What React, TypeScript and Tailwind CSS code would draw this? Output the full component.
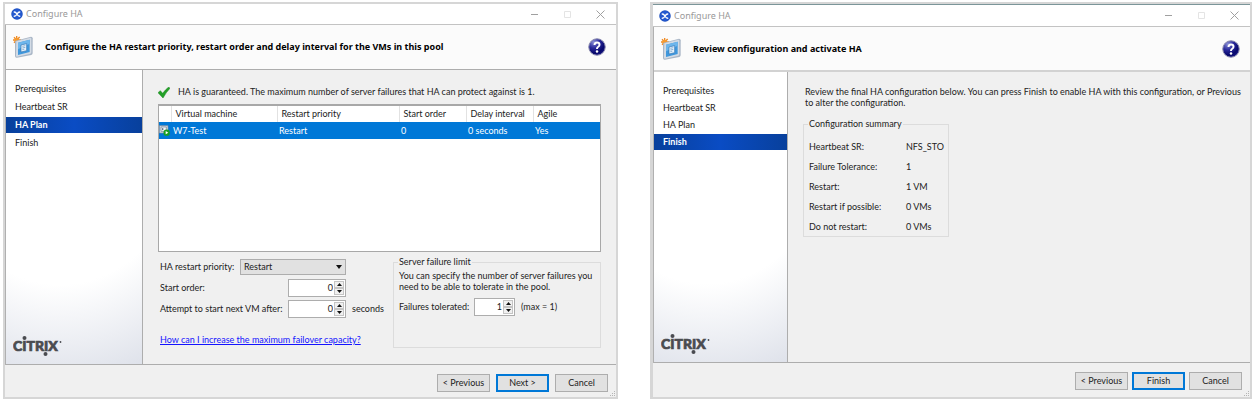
import { useState } from "react";
import type { ReactNode } from "react";
import clsx from "clsx";

const steps = ["Prerequisites", "Heartbeat SR", "HA Plan", "Finish"];

const summary = [
  { label: "Heartbeat SR:", value: "NFS_STO" },
  { label: "Failure Tolerance:", value: "1" },
  { label: "Restart:", value: "1 VM" },
  { label: "Restart if possible:", value: "0 VMs" },
  { label: "Do not restart:", value: "0 VMs" },
];

const columns = ["Virtual machine", "Restart priority", "Start order", "Delay interval", "Agile"];

const XenIcon = () => (
  <svg viewBox="0 0 24 24" className="size-3 shrink-0" aria-hidden="true">
    <circle cx="12" cy="12" r="11.5" fill="#1d4fc0" />
    <circle cx="12" cy="12" r="10" fill="#2459cf" />
    <path d="M6.500 8c2.500 0 4 1.500 5.500 4 1.500-2.500 3-4 5.500-4M6.500 16.500c2.500 0 4-1.500 5.500-4 1.500 2.500 3 4 5.500 4" stroke="#fff" strokeWidth="2.600" fill="none" strokeLinecap="round" />
  </svg>
);

const WizardIcon = () => (
  <svg viewBox="0 0 60 66" className="h-[22px] w-5 shrink-0" aria-hidden="true">
    <g stroke="#f08a24" strokeWidth="4">
      <path d="M11 0v24M0 12h24M3 4l17 17M20 3 3 20" />
    </g>
    <circle cx="11" cy="12" r="7" fill="#f59a2f" />
    <path d="M8 14 54 2q5 0 5 5v44q0 5-4 6L12 65q-6 1-6-5V18q0-3 2-4z" fill="#a9b6c6" />
    <path d="M10 16 52 5q3 0 3 3v41q0 3-3 4L12 62q-3 0-3-3z" fill="#d3dbe5" />
    <path d="M15 20 50 11v37l-35 9z" fill="#3f97dc" />
    <path d="M15 20 50 11v12L15 40z" fill="#6db6ec" />
    <path d="m24 27 17-4v21l-17 4z" fill="#e8f3fb" stroke="#3576b4" strokeWidth="2" />
    <path d="m28 31 9-2M28 36l9-2M28 41l6-1.500" stroke="#5f93c4" strokeWidth="2" />
  </svg>
);

const HelpIcon = () => (
  <svg viewBox="0 0 36 36" className="size-[18px]" aria-hidden="true">
    <defs>
      <radialGradient id="help" cx="0.3" cy="0.2" r="0.9">
        <stop offset="0" stopColor="#8a8fd6" />
        <stop offset="0.4" stopColor="#2a2a9c" />
        <stop offset="0.75" stopColor="#06066a" />
        <stop offset="1" stopColor="#1c1c8c" />
      </radialGradient>
    </defs>
    <circle cx="18" cy="18" r="16.500" fill="url(#help)" stroke="#8c8cae" strokeWidth="2" />
    <path d="M13 14q0-5 5-5t5 4.500q0 2.500-2.500 4T18 22" stroke="#fff" strokeWidth="4" fill="none" />
    <circle cx="18" cy="27" r="2.500" fill="#fff" />
  </svg>
);

const CheckIcon = () => (
  <svg viewBox="0 0 36 33" className="h-[11px] w-3 shrink-0" aria-hidden="true">
    <path d="M0 17 7 11l7 8Q22 8 32 0l4 4Q25 15 15 33z" fill="#23a127" stroke="#16801b" strokeWidth="1.500" />
  </svg>
);

const VmIcon = () => (
  <svg viewBox="0 0 33 33" className="size-[11px]" aria-hidden="true">
    <path d="M1 2h26v22H1z" fill="#d5dde6" stroke="#7d8b99" strokeWidth="2" />
    <path d="M6 6h16v13H6z" fill="#f4f7fa" stroke="#6b7c8e" strokeWidth="2" />
    <path d="M9 9v7l6-4z" fill="#4a6076" />
    <circle cx="23" cy="23" r="9.500" fill="#18a022" />
    <path d="M20 18v10l8-5z" fill="#fff" />
  </svg>
);

const CitrixLogo = () => (
  <svg viewBox="0 0 50 20" className="h-5 w-[50px]" role="img" aria-label="Citrix">
    <g fill="#4a4b50">
      <text x="0" y="15" fontFamily="Lato, sans-serif" fontWeight="900" fontSize="14" stroke="#4a4b50" strokeWidth="0.700">CITRIX</text>
      <circle cx="11.500" cy="2" r="2" />
      <circle cx="32.500" cy="18" r="2" />
      <circle cx="47.500" cy="6" r="0.900" />
    </g>
  </svg>
);

const CaptionButtons = () => (
  <div className="ml-auto flex h-full gap-[3px] pr-px text-[#a0a0a0]">
    <button aria-label="Minimize" className="grid w-[30px] place-items-center">
      <svg viewBox="0 0 9 9" className="size-[9px]"><path d="M1 4.500h7" stroke="currentColor" /></svg>
    </button>
    <button aria-label="Maximize" disabled className="grid w-[30px] place-items-center text-[#e4e4e4]">
      <svg viewBox="0 0 9 9" className="size-[9px]"><path d="M1.500 1.500h6v6h-6z" fill="none" stroke="currentColor" /></svg>
    </button>
    <button aria-label="Close" className="grid w-[30px] place-items-center">
      <svg viewBox="0 0 9 9" className="size-[9px]"><path d="m.5.5 8 8M8.500.5l-8 8" stroke="currentColor" /></svg>
    </button>
  </div>
);

const DialogButton = ({ children, primary }: { children: ReactNode; primary?: boolean }) => (
  <button
    className={clsx(
      "h-[18px] w-[53px] bg-[#e1e1e1] text-center leading-[14px]",
      primary ? "border-2 border-[#0078d7]" : "border border-[#adadad]"
    )}
  >
    {children}
  </button>
);

type DialogProps = {
  heading: string;
  current: string;
  next: string;
  framed?: boolean;
  children: ReactNode;
};

const Dialog = ({ heading, current, next, framed, children }: DialogProps) => (
  <section
    className={clsx(
      "relative flex flex-col border-2 border-[#d6d6d6] bg-[#f0f0f0]",
      framed && "border-l-3"
    )}
  >
    <div
      className={clsx(
        "flex items-center gap-[3px] border-b border-[#c3c3c3] bg-white pl-[6px]",
        framed ? "h-[23px] border-t border-t-[#7b9599]" : "h-[21px]"
      )}
    >
      <XenIcon />
      <span className="font-['Noto_Sans',sans-serif] text-[9px] text-[#999]">Configure HA</span>
      <CaptionButtons />
    </div>
    <div className="flex flex-1 flex-col border-l border-[#b0b0b0]">
      <header
        className={clsx(
          "flex h-[45px] items-center gap-3 bg-[#fbfbfb] pr-[10px] pl-[7px]",
          framed ? "border-b-2 border-[#d2d2d2]" : "border-b border-[#adadad]"
        )}
      >
        <WizardIcon />
        <h1 className="flex-1 font-['Noto_Sans',sans-serif] text-[9px] font-bold text-black">{heading}</h1>
        <button aria-label="Help"><HelpIcon /></button>
      </header>
      <div className="flex flex-1 border-b border-[#adadad]">
        <nav
          className={clsx(
            "flex shrink-0 flex-col border-r border-[#adadad] bg-[radial-gradient(ellipse_150%_80%_at_40%_25%,#fff_60%,#eceef3_85%,#d8dce6_110%)] pt-[11px]",
            framed ? "w-[134px]" : "w-[137px]"
          )}
        >
          <ol className={clsx("flex flex-col", framed ? "gap-px" : "gap-[2px]")}>
            {steps.map((step) => (
              <li
                key={step}
                aria-current={step === current ? "step" : undefined}
                className={clsx(
                  "h-4 pl-[9px] leading-4",
                  step === current && "bg-linear-to-r from-[#08409c] via-[#0a4cc4] to-[#08409c] font-bold text-white"
                )}
              >
                {step}
              </li>
            ))}
          </ol>
          <div className="mt-auto pb-2 pl-[7px]"><CitrixLogo /></div>
        </nav>
        <main className="min-w-0 flex-1">{children}</main>
      </div>
    </div>
    <footer
      className={clsx("flex items-start justify-end pt-[9px] pr-2", framed ? "h-[34px] gap-1" : "h-8 gap-[6px]")}
    >
      <DialogButton>&lt; Previous</DialogButton>
      <DialogButton primary>{next}</DialogButton>
      <DialogButton>Cancel</DialogButton>
    </footer>
    <svg viewBox="0 0 6 6" className="absolute right-0 bottom-0 size-[6px]" aria-hidden="true">
      <path d="M4 0h1v1H4zM2 2h1v1H2zM4 2h1v1H4zM0 4h1v1H0zM2 4h1v1H2zM4 4h1v1H4z" fill="#b5b5b5" />
    </svg>
  </section>
);

type SpinnerProps = { id: string; value: number; max?: number; className: string; onChange: (value: number) => void };

const Spinner = ({ id, value, max = 999, className, onChange }: SpinnerProps) => (
  <div className={clsx("flex h-[18px] border border-[#adadad] bg-white p-px", className)}>
    <input
      id={id}
      inputMode="numeric"
      value={value}
      onChange={(e) => onChange(Math.min(max, Number(e.target.value) || 0))}
      className="w-0 flex-1 pr-px text-right leading-[14px] outline-none"
    />
    <div className="flex w-[10px] flex-col">
      <button aria-label="Increase" onClick={() => onChange(Math.min(max, value + 1))} className="grid flex-1 place-items-center border border-[#c4c4c4] bg-[#f0f0f0]">
        <svg viewBox="0 0 5 3" className="h-[3px] w-[5px]"><path d="M2.500 0 5 3H0z" fill="#111" /></svg>
      </button>
      <button aria-label="Decrease" onClick={() => onChange(Math.max(0, value - 1))} className="grid flex-1 place-items-center border border-[#c4c4c4] bg-[#f0f0f0]">
        <svg viewBox="0 0 5 3" className="h-[3px] w-[5px]"><path d="M0 0h5L2.500 3z" fill="#111" /></svg>
      </button>
    </div>
  </div>
);

const HaPlan = () => {
  const [priority, setPriority] = useState("Restart");
  const [order, setOrder] = useState(0);
  const [delay, setDelay] = useState(0);
  const [failures, setFailures] = useState(1);

  return (
    <div className="pt-[15px] pr-[15px] pb-4 pl-[15px]">
      <p className="flex h-[14px] items-center gap-2">
        <CheckIcon />
        HA is guaranteed. The maximum number of server failures that HA can protect against is 1.
      </p>
      <div className="mt-[5px] h-[148px] border border-t-2 border-[#a8a8a8] bg-white">
        <table className="w-full table-fixed border-collapse text-left">
          <colgroup>
            <col className="w-[12px]" />
            <col className="w-[106px]" />
            <col className="w-[122px]" />
            <col className="w-[67px]" />
            <col className="w-[67px]" />
            <col />
          </colgroup>
          <thead>
            <tr className="h-4">
              <td className="border-r border-[#e2e2e2]" />
              {columns.map((c) => (
                <th key={c} className="border-r border-[#e2e2e2] p-0 pl-1 leading-4 font-normal last:border-r-0">{c}</th>
              ))}
            </tr>
          </thead>
          <tbody>
            <tr className="h-[17px] bg-[#0078d7] text-white">
              <td className="p-0"><VmIcon /></td>
              <td className="pl-[2px] leading-4">W7-Test</td>
              <td className="pl-[2px] leading-4">{priority}</td>
              <td className="pl-[2px] leading-4">{order}</td>
              <td className="pl-[2px] leading-4">{delay} seconds</td>
              <td className="pl-[2px] leading-4">Yes</td>
            </tr>
          </tbody>
        </table>
      </div>
      <div className="flex">
        <div className="w-[235px] shrink-0 pt-[6px] pl-[2px]">
          <div className="flex h-[18px] items-center">
            <label htmlFor="priority" className="w-20">HA restart priority:</label>
            <div className="relative">
              <select
                id="priority"
                value={priority}
                onChange={(e) => setPriority(e.target.value)}
                className="h-4 w-[106px] appearance-none border border-[#adadad] bg-[#e1e1e1] pl-[3px] leading-[14px]"
              >
                <option>Restart</option>
                <option>Restart if possible</option>
                <option>Do not restart</option>
              </select>
              <svg viewBox="0 0 6 4" className="pointer-events-none absolute top-[6px] right-1 h-1 w-[6px]"><path d="M0 0h6L3 4z" fill="#111" /></svg>
            </div>
          </div>
          <div className="mt-[3px] flex h-[18px] items-center">
            <label htmlFor="order" className="w-32">Start order:</label>
            <Spinner id="order" value={order} onChange={setOrder} className="w-[58px]" />
          </div>
          <div className="mt-[3px] flex h-[18px] items-center">
            <label htmlFor="delay" className="w-32">Attempt to start next VM after:</label>
            <Spinner id="delay" value={delay} onChange={setDelay} className="w-[58px]" />
            <span className="pl-[6px]">seconds</span>
          </div>
          <a href="#capacity" className="mt-4 inline-block leading-3 text-[#1414ff] underline">
            How can I increase the maximum failover capacity?
          </a>
        </div>
        <fieldset className="mt-1 h-[92px] flex-1 border border-[#dcdcdc] pl-1">
          <legend className="px-px leading-3">Server failure limit</legend>
          <p className="pt-[2px] pl-px leading-[11px]">
            You can specify the number of server failures you<br />need to be able to tolerate in the pool.
          </p>
          <div className="mt-[6px] flex h-[18px] items-center pl-px">
            <label htmlFor="failures" className="w-[75px]">Failures tolerated:</label>
            <Spinner id="failures" value={failures} max={1} onChange={setFailures} className="w-[41px]" />
            <span className="pl-[6px]">(max = 1)</span>
          </div>
        </fieldset>
      </div>
    </div>
  );
};

const Review = () => (
  <div className="pt-[14px] pr-2 pl-[15px]">
    <p className="pl-[2px] leading-[11px]">
      Review the final HA configuration below. You can press Finish to enable HA with this configuration, or Previous<br />to alter the configuration.
    </p>
    <fieldset className="mt-[10px] h-[119px] w-[146px] border border-[#dcdcdc] pl-1">
      <legend className="px-px leading-3">Configuration summary</legend>
      <dl className="grid grid-cols-[97px_1fr] pt-[7px] pl-px">
        {summary.map((row) => (
          <div key={row.label} className="col-span-2 grid h-5 grid-cols-subgrid items-center">
            <dt>{row.label}</dt>
            <dd>{row.value}</dd>
          </div>
        ))}
      </dl>
    </fieldset>
  </div>
);

export default function App() {
  return (
    <div className="min-h-screen bg-white px-[3px] py-[2px] font-['Lato',sans-serif] text-[9px] leading-3 text-[#222]">
      <div className="grid grid-cols-[615fr_602fr] gap-8">
        <Dialog heading="Configure the HA restart priority, restart order and delay interval for the VMs in this pool" current="HA Plan" next="Next >">
          <HaPlan />
        </Dialog>
        <Dialog heading="Review configuration and activate HA" current="Finish" next="Finish" framed>
          <Review />
        </Dialog>
      </div>
    </div>
  );
}
